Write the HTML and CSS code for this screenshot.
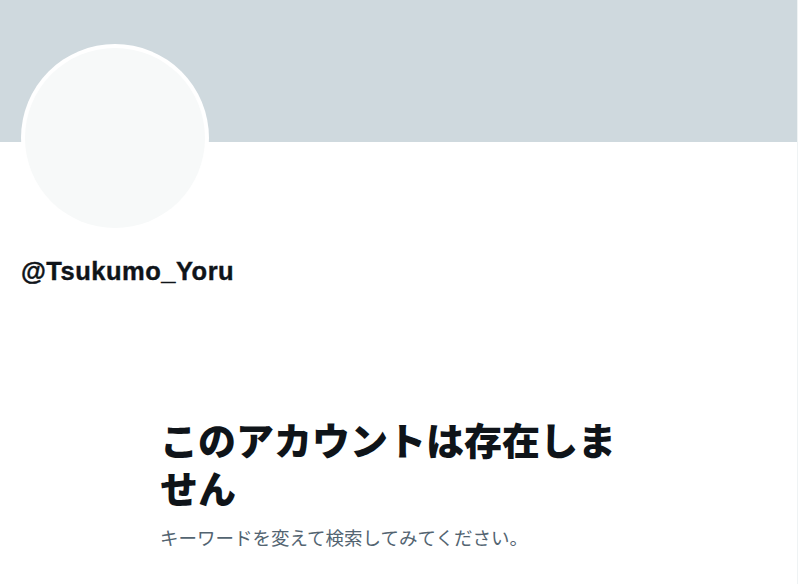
FILE: index.html
```html
<!DOCTYPE html>
<html lang="ja">
<head>
<meta charset="utf-8">
<link rel="stylesheet" href="styles.css">
</head>
<body>
<div class="page">
  <div class="banner"></div>
  <div class="profile">
    <div class="avatar"><div class="avatar-inner"></div></div>
    <div class="handle">@Tsukumo_Yoru</div>
  </div>
  <div class="empty">
    <h1 class="empty-title">このアカウントは存在しません</h1>
    <p class="empty-sub">キーワードを変えて検索してみてください。</p>
  </div>
</div>
</body>
</html>
```
FILE: styles.css
```css
html, body {
  margin: 0;
  padding: 0;
  background: #ffffff;
}
body {
  font-family: "Liberation Sans", "Noto Sans CJK JP", sans-serif;
  color: #0f1419;
  overflow: hidden;
}
.page {
  width: 797px;
  height: 584px;
  border-right: 1px solid #eff3f4;
}
.banner {
  height: 142px;
  background: #cfd9de;
}
.profile {
  padding-left: 21px;
  display: flex;
  flex-direction: column;
  align-items: flex-start;
}
.avatar {
  margin-top: -98px;
  width: 188px;
  height: 188px;
  border-radius: 50%;
  background: #ffffff;
  padding: 4px;
  box-sizing: border-box;
}
.avatar-inner {
  width: 100%;
  height: 100%;
  border-radius: 50%;
  background: #f7f9f9;
}
.handle {
  margin-top: 24px;
  font-size: 25.5px;
  line-height: 30px;
  font-weight: 700;
  letter-spacing: 0.5px;
  -webkit-text-stroke: 0.4px #0f1419;
}
.empty {
  margin: 129px 0 0 160px;
  width: 480px;
}
.empty-title {
  margin: 0;
  font-family: "Noto Sans CJK JP", sans-serif;
  font-size: 38px;
  line-height: 48px;
  font-weight: 900;
}
.empty-sub {
  margin: 14px 0 0;
  font-family: "Noto Sans CJK JP", sans-serif;
  font-size: 18.5px;
  line-height: 24px;
  color: #536471;
}
```
